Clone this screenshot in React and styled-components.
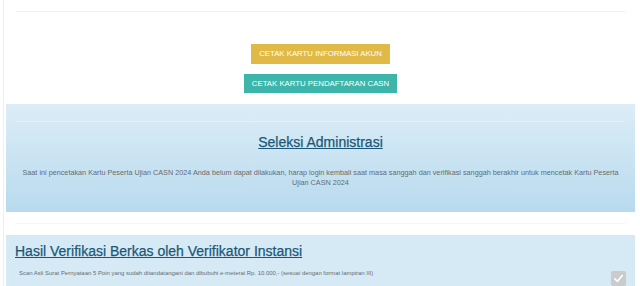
import styled, { createGlobalStyle } from 'styled-components';

const GlobalStyle = createGlobalStyle`
  html, body {
    margin: 0;
    padding: 0;
    background: #ffffff;
    font-family: "Liberation Sans", Arial, sans-serif;
  }
`

const Frame = styled.div`
  margin-left: 3px;
  border-left: 1px solid #e2f3f6;
  padding: 11px 5px 0 2px;
  min-height: 286px;
  box-sizing: border-box;
`

const Rule = styled.hr`
  border: 0;
  border-top: 1px solid ${props => props.$light ? '#f3f6f8' : '#edf1f3'};
  margin: 0 10px;
  height: 0;
`

const Actions = styled.div`
  display: flex;
  flex-direction: column;
  align-items: center;
  gap: 10px;
  margin: 32px 0 11px;
`

const Button = styled.button`
  border: 0;
  border-radius: 0;
  background: ${props => props.$color};
  color: #ffffff;
  font-family: "Liberation Sans", Arial, sans-serif;
  font-size: 7.8px;
  line-height: 19px;
  height: 19.5px;
  padding: 0 ${props => props.$pad}px;
  cursor: pointer;
`

const Panel = styled.section`
  background: linear-gradient(to bottom, #dcedf7 0%, #b8daee 100%);
  height: 108px;
  padding-top: 17px;
  box-sizing: border-box;
`

const PanelRule = styled.hr`
  border: 0;
  border-top: 1px solid rgba(255, 255, 255, 0.35);
  margin: 0 10px;
`

const Title = styled.h3`
  margin: ${props => props.$margin};
  font-size: 14px;
  font-weight: 500;
  line-height: 16px;
  color: #1b5878;
  text-align: ${props => props.$align || 'left'};
  text-decoration: underline;
  text-underline-offset: 1px;
  -webkit-text-stroke: 0.25px #1b5878;
`

const Note = styled.p`
  margin: 18px 10px 0;
  font-size: 7.25px;
  line-height: 10px;
  color: #666c70;
  text-align: center;
`

const Gap = styled.div`
  padding-top: 11px;
`

const Verifikasi = styled.section`
  margin-top: 11px;
  background: #d6eaf6;
  padding: 8px 9px 6px 9px;
  height: 60px;
  box-sizing: border-box;
`

const Item = styled.div`
  display: flex;
  align-items: flex-start;
  justify-content: space-between;
  margin-top: 9px;
  padding-left: 4px;
`

const ItemText = styled.span`
  font-size: 5.95px;
  line-height: 10px;
  color: #666c70;
`

const Check = styled.span`
  display: flex;
  align-items: center;
  justify-content: center;
  width: 15px;
  height: 15px;
  border-radius: 2px;
  background: #c9cbcc;
  margin-top: 3px;
`

function App() {
  return (
    <>
      <GlobalStyle />
      <Frame>
        <Rule />
        <Actions>
          <Button $color="#e1b946" $pad={8}>CETAK KARTU INFORMASI AKUN</Button>
          <Button $color="#3db5aa" $pad={8}>CETAK KARTU PENDAFTARAN CASN</Button>
        </Actions>
        <Panel>
          <PanelRule />
          <Title $align="center" $margin="12px 0 0">Seleksi Administrasi</Title>
          <Note>
            Saat ini pencetakan Kartu Peserta Ujian CASN 2024 Anda belum dapat dilakukan, harap login kembali saat masa sanggah dan verifikasi sanggah berakhir untuk mencetak Kartu Peserta Ujian CASN 2024
          </Note>
        </Panel>
        <Gap>
          <Rule $light />
        </Gap>
        <Verifikasi>
          <Title $margin="0">Hasil Verifikasi Berkas oleh Verifikator Instansi</Title>
          <Item>
            <ItemText>
              Scan Asli Surat Pernyataan 5 Poin yang sudah ditandatangani dan dibubuhi e-meterai Rp. 10.000,- (sesuai dengan format lampiran III)
            </ItemText>
            <Check>
              <svg width="11" height="11" viewBox="0 0 12 12">
                <path d="M2 6.5 L4.8 9.2 L10 2.8" fill="none" stroke="#ffffff" strokeWidth="1.8" strokeLinecap="round" strokeLinejoin="round" />
              </svg>
            </Check>
          </Item>
        </Verifikasi>
      </Frame>
    </>
  );
}

export default App;
